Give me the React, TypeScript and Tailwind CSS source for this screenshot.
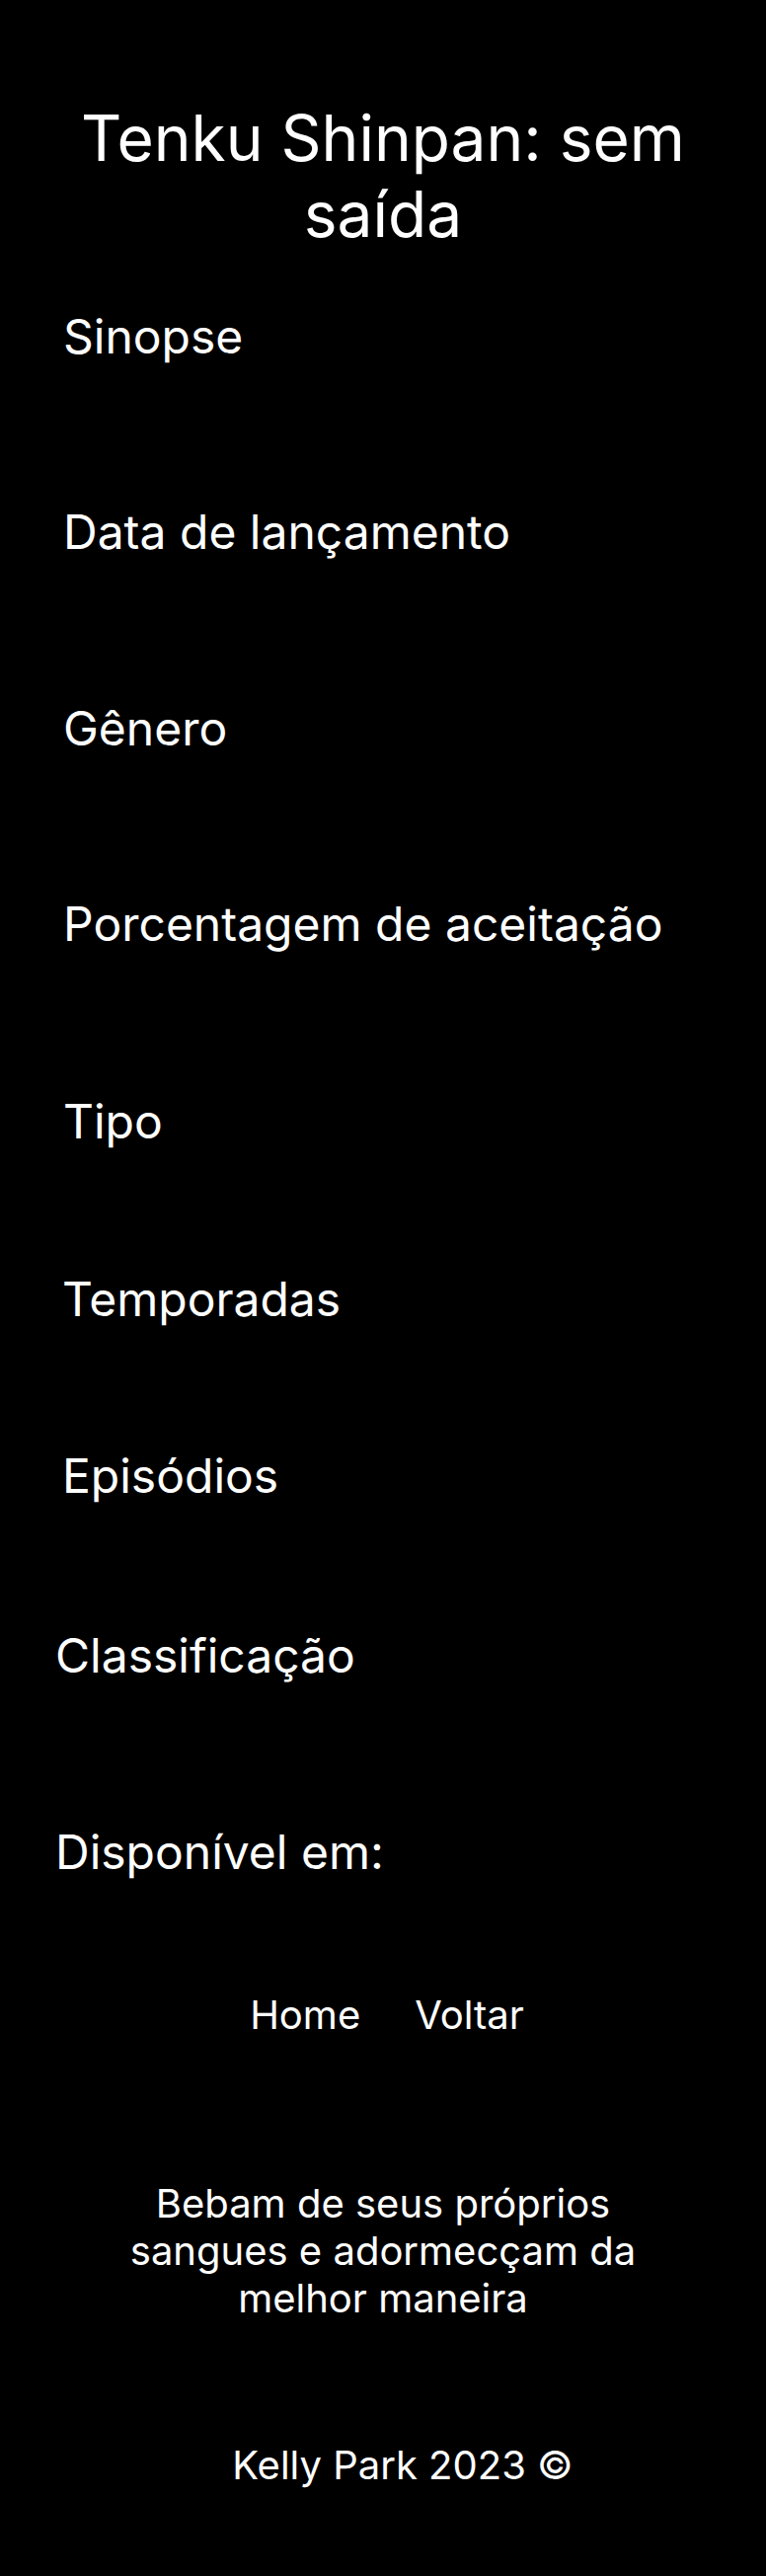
const fields = [
  { label: "Sinopse", className: "mt-[57px] pl-16" },
  { label: "Data de lançamento", className: "mt-[140px] pl-16" },
  { label: "Gênero", className: "mt-[141px] pl-16" },
  { label: "Porcentagem de aceitação", className: "mt-[140px] pl-16" },
  { label: "Tipo", className: "mt-[142px] pl-16" },
  { label: "Temporadas", className: "mt-[122px] pl-[63px]" },
  { label: "Episódios", className: "mt-[121px] pl-[63px]" },
  { label: "Classificação", className: "mt-[124px] pl-14" },
  { label: "Disponível em:", className: "mt-[141px] pl-14" },
];

export default function App() {
  return (
    <div
      className="min-h-screen bg-black text-white pb-[88px]"
      style={{ fontFamily: "Inter, 'Noto Sans', sans-serif" }}
    >
      <h1 className="pt-[101px] text-center text-[64px] leading-[77px] font-normal">
        Tenku Shinpan: sem saída
      </h1>

      <section>
        {fields.map((f) => (
          <h2 key={f.label} className={`${f.className} text-[48px] leading-[58px] font-normal`}>
            {f.label}
          </h2>
        ))}
      </section>

      <nav className="mt-[112px] pl-[8px] flex justify-center gap-[55px] text-[40px] leading-[48px]">
        <a href="#">Home</a>
        <a href="#">Voltar</a>
      </nav>

      <footer>
        <p className="mt-[143px] mx-auto max-w-[560px] text-center text-[40px] leading-[48px]">
          Bebam de seus próprios sangues e adormecçam da melhor maneira
        </p>
        <p className="mt-[121px] pl-[40px] text-center text-[40px] leading-[48px]">
          Kelly Park 2023 ©
        </p>
      </footer>
    </div>
  );
}
